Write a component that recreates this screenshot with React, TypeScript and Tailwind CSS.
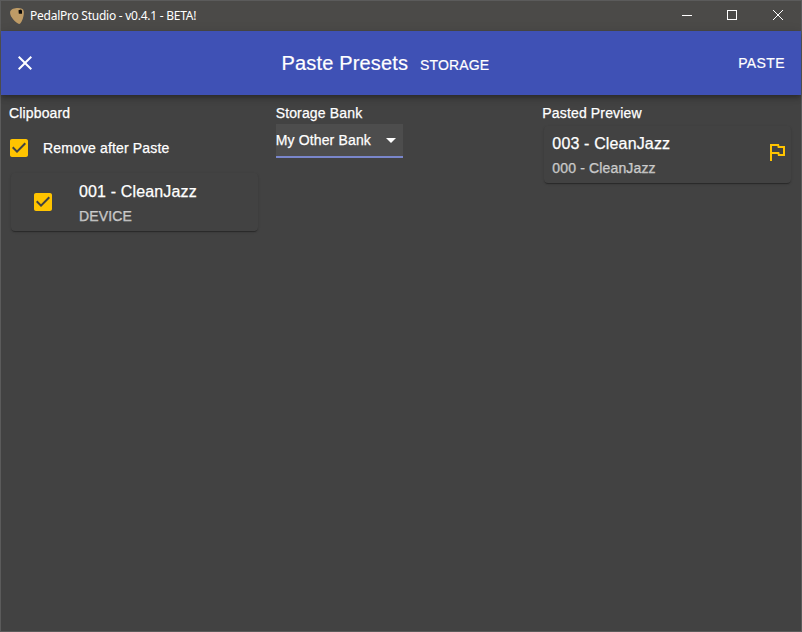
import React from 'react';

function Checked({ className = '' }: { className?: string }) {
  return (
    <svg viewBox="0 0 24 24" className={`block size-6 shrink-0 fill-[#ffc400] ${className}`}>
      <path d="M19 3H5c-1.11 0-2 .9-2 2v14c0 1.1.89 2 2 2h14c1.11 0 2-.9 2-2V5c0-1.1-.89-2-2-2zm-9 14l-5-5 1.41-1.41L10 14.17l7.59-7.59L19 8l-9 9z" />
    </svg>
  );
}

const cardShadow =
  'rounded shadow-[0px_2px_1px_-1px_rgba(0,0,0,0.2),0px_1px_1px_0px_rgba(0,0,0,0.14),0px_1px_3px_0px_rgba(0,0,0,0.12)]';

function TitleBar() {
  return (
    <div className="flex h-[30px] items-center bg-[#4b4a48] pl-2">
      <svg viewBox="0 0 16 18" className="h-[18px] w-4 shrink-0">
        <path d="M1.2 4.5C2 2 5.500 1 9 1c3.200 0 5.500.8 5.800 3.500.3 4.500-1.300 9.500-3.600 12-.6.6-1.400.6-2.200 0C5 14 .2 8.500 1.200 4.500z" fill="#be9b66" />
        <path d="M9.500 3.300l2.500-.8 1 1v3.200H9.800z" fill="#080808" />
      </svg>
      <span className="ml-[5px] font-['Noto_Sans',sans-serif] text-[12px] leading-4 tracking-[-0.25px] text-white">
        PedalPro Studio - v0.4.1 - BETA!
      </span>
      <div className="ml-auto flex text-white">
        <svg viewBox="0 0 46 30" className="h-[30px] w-[46px]" fill="none" stroke="currentColor" shapeRendering="crispEdges">
          <path d="M18 14.500h10" />
        </svg>
        <svg viewBox="0 0 45 30" className="h-[30px] w-[45px]" fill="none" stroke="currentColor" shapeRendering="crispEdges">
          <path d="M17.500 9.500h9v9h-9z" />
        </svg>
        <svg viewBox="0 0 46 30" className="h-[30px] w-[46px]" fill="none" stroke="currentColor">
          <path d="M18 9l10 10M28 9L18 19" />
        </svg>
      </div>
    </div>
  );
}

export default function App() {
  return (
    <div className="flex h-[632px] w-[802px] flex-col border border-[#5b5b5b] bg-[#424242] font-['Liberation_Sans',Arial,sans-serif] text-sm tracking-[0.15px] text-white">
      <TitleBar />
      <header className="flex h-16 shrink-0 items-center bg-[#3f51b5] shadow-[0px_2px_4px_-1px_rgba(0,0,0,0.2),0px_4px_5px_0px_rgba(0,0,0,0.14),0px_1px_10px_0px_rgba(0,0,0,0.12)] [-webkit-text-stroke:0.2px_currentColor]">
        <svg viewBox="0 0 24 24" className="ml-3 size-6 fill-white">
          <path d="M19 6.410L17.590 5 12 10.590 6.410 5 5 6.410 10.590 12 5 17.590 6.410 19 12 13.410 17.590 19 19 17.590 13.410 12z" />
        </svg>
        <h1 className="ml-[244.600px] text-[20px] leading-8">Paste Presets</h1>
        <span className="ml-3 pt-1 leading-6">STORAGE</span>
        <span className="mr-4 ml-auto leading-6 tracking-[0.4px]">PASTE</span>
      </header>
      <main className="grid grid-cols-3 [-webkit-text-stroke:0.25px_currentColor]">
        <section className="p-2">
          <h2 className="leading-5">Clipboard</h2>
          <label className="mt-1 flex h-[42px] items-center">
            <Checked className="-ml-0.5" />
            <span className="ml-3">Remove after Paste</span>
          </label>
          <div className={`mx-0.5 mt-1 flex h-[58px] items-center ${cardShadow}`}>
            <Checked className="ml-5" />
            <div className="ml-6">
              <div className="pt-0.5 text-base leading-6">001 - CleanJazz</div>
              <div className="pt-0.5 leading-5 text-white/65">DEVICE</div>
            </div>
          </div>
        </section>
        <section className="p-2">
          <h2 className="leading-5">Storage Bank</h2>
          <div className="mt-px flex h-[34px] w-[127px] items-center justify-between border-b-2 border-[#7986cb] bg-[#4d4d4d]">
            <span>My Other Bank</span>
            <svg viewBox="0 0 24 24" className="size-6 fill-white">
              <path d="M7 10l5 5 5-5z" />
            </svg>
          </div>
        </section>
        <section className="p-2">
          <h2 className="leading-5">Pasted Preview</h2>
          <div className={`mx-0.5 mt-[3px] flex h-[57px] items-start pr-0.5 pl-2 ${cardShadow}`}>
            <div className="pt-1.5">
              <div className="text-base leading-6">003 - CleanJazz</div>
              <div className="pt-0.5 leading-5 text-white/65">000 - CleanJazz</div>
            </div>
            <svg viewBox="0 0 24 24" className="mt-3.5 ml-auto size-6 fill-[#ffc400]">
              <path d="M12.360 6l.4 2H18v6h-3.360l-.4-2H7V6h5.360M14 4H5v17h2v-7h5.600l.4 2h7V6h-5.600L14 4z" />
            </svg>
          </div>
        </section>
      </main>
    </div>
  );
}
